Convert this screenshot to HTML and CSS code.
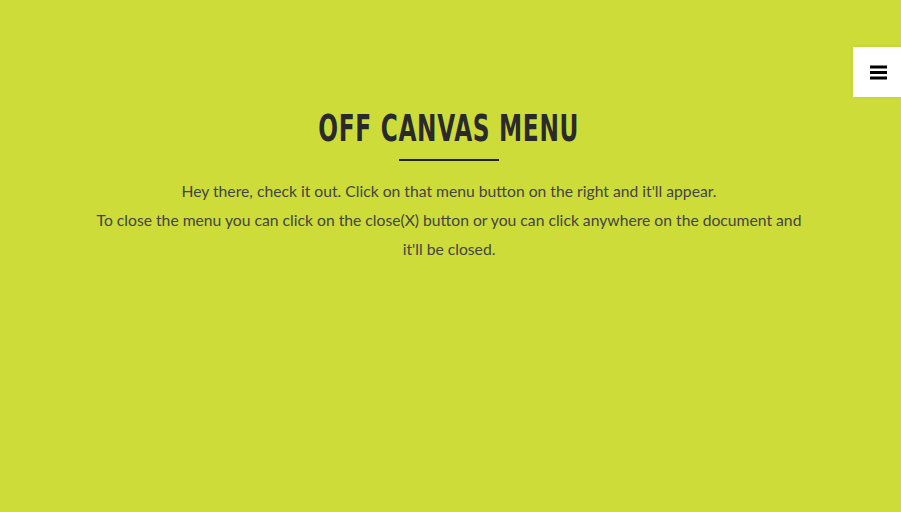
FILE: index.html
```html
<!DOCTYPE html>
<html>
<head>
<meta charset="utf-8">
<link rel="stylesheet" href="styles.css">
</head>
<body>
<button class="menu-btn" aria-label="Menu">
  <svg width="17" height="15" viewBox="0 0 17 15"><rect x="0" y="0.5" width="17" height="3" fill="#000"/><rect x="0" y="6" width="17" height="3" fill="#000"/><rect x="0" y="11.5" width="17" height="3" fill="#000"/></svg>
</button>
<div class="page">
  <main class="content">
    <h1 class="title"><span class="title-inner">OFF CANVAS MENU</span></h1>
    <div class="rule"></div>
    <p class="text">Hey there, check it out. Click on that menu button on the right and it'll appear.<br>To close the menu you can click on the close(X) button or you can click anywhere on the document and it'll be closed.</p>
  </main>
</div>
</body>
</html>
```
FILE: styles.css
```css
html, body {
  margin: 0;
  padding: 0;
  height: 100%;
}
body {
  background: #cddc39;
  font-family: Lato, "Open Sans", sans-serif;
  overflow: hidden;
}
.page {
  padding-right: 3px;
}
.menu-btn {
  position: absolute;
  top: 47px;
  right: 0;
  width: 48px;
  height: 50px;
  background: #fff;
  border: 0;
  padding: 0;
  display: flex;
  align-items: center;
  justify-content: center;
  box-shadow: 0 0 4px rgba(0,0,0,0.08);
}
.menu-btn svg { display: block; margin-left: 2px; }
.content {
  max-width: 720px;
  margin: 0 auto;
  padding-top: 103px;
  text-align: center;
}
.title {
  margin: 0;
  font-family: "DejaVu Sans Condensed", "Liberation Sans Narrow", sans-serif;
  font-weight: bold;
  font-size: 38px;
  line-height: 50px;
  color: #2a2a2a;
  letter-spacing: 1px;
}
.title-inner {
  display: inline-block;
  transform: scaleX(0.68);
}
.rule {
  width: 100px;
  height: 2px;
  background: #222;
  margin: 6px auto 0;
}
.text {
  margin: 16px 0 0;
  font-size: 15.7px;
  line-height: 29px;
  color: #444;
}
```
